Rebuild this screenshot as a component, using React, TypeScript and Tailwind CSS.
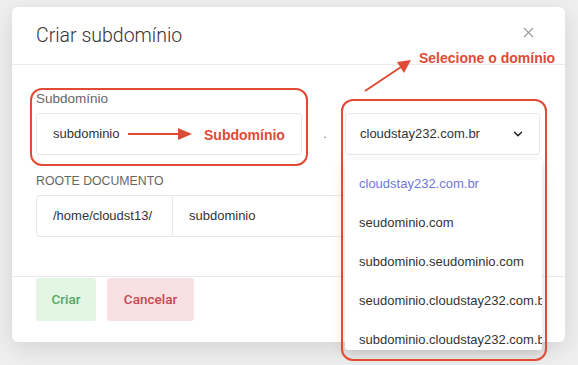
import { X, ChevronDown } from "lucide-react";

const domains = [
    "cloudstay232.com.br",
    "seudominio.com",
    "subdominio.seudominio.com",
    "seudominio.cloudstay232.com.br",
    "subdominio.cloudstay232.com.br",
];

const font = { fontFamily: "'Liberation Sans', Arial, sans-serif" };

export default function App() {
    return (
        <div className="relative w-[578px] h-[365px] overflow-hidden bg-[#efefef] pt-[7px] pl-[12px]" style={font}>
            {/* modal */}
            <div className="w-[553px] h-[335px] bg-white rounded-md shadow-[0_6px_24px_rgba(0,0,0,0.12)] flex flex-col">
                <div className="h-[58px] flex items-center justify-between pl-[24px] pr-[28px] border-b border-[#ebebeb]">
                    <h1 className="text-[19.5px] font-light text-[#333] pt-[1px]" style={{ fontFamily: "Roboto, sans-serif" }}>
                        Criar subdomínio
                    </h1>
                    <X className="w-[17px] h-[17px] text-[#9a9a9a] -mt-[6px]" strokeWidth={1.5} />
                </div>

                <div className="pl-[24px] pr-[25px] pt-[24px] pb-[39px] border-b border-[#ebebeb]">
                    <label className="block text-[13.5px] leading-[20px] text-[#666]">Subdomínio</label>
                    <div className="flex items-center mt-[4px]">
                        <div className="w-[266px] h-[42px] border border-[#e8e8e8] rounded-[3px] flex items-center pl-[16px] text-[13px] text-[#333]">
                            subdominio
                        </div>
                        <div className="flex-1 text-center text-[13px] text-[#777] pl-[3px]">.</div>
                        <div className="w-[195px] h-[42px] border border-[#e8e8e8] rounded-[3px] flex items-center justify-between pl-[14px] pr-[14px] text-[13px] text-[#333]">
                            cloudstay232.com.br
                            <ChevronDown className="w-[14px] h-[14px] text-[#222]" strokeWidth={2.5} />
                        </div>
                    </div>

                    <label className="block text-[12.3px] leading-[20px] text-[#666] mt-[16px]">ROOTE DOCUMENTO</label>
                    <div className="flex mt-[4px]">
                        <div className="w-[137px] h-[42px] border border-[#e8e8e8] rounded-l-[3px] flex items-center pl-[16px] text-[13px] text-[#333]">
                            /home/cloudst13/
                        </div>
                        <div className="flex-1 h-[42px] border border-l-0 border-[#e8e8e8] rounded-r-[3px] flex items-center pl-[16px] text-[13px] text-[#333]">
                            subdominio
                        </div>
                    </div>
                </div>

                <div className="flex gap-[11px] pl-[24px] pt-[1px]" style={{ fontFamily: "Roboto, sans-serif" }}>
                    <button className="w-[60px] h-[43px] rounded-[3px] bg-[#e3f5e3] text-[#5aa55c] text-[13.5px] font-medium">Criar</button>
                    <button className="w-[87px] h-[43px] rounded-[3px] bg-[#f9e1e3] text-[#c9464f] text-[13.5px] font-medium">Cancelar</button>
                </div>
            </div>

            {/* dropdown menu */}
            <div className="absolute left-[345px] top-[160px] w-[197px] h-[190px] overflow-hidden bg-white shadow-[0_4px_14px_rgba(0,0,0,0.15)] rounded-b-[3px] pt-[4px]">
                {domains.map((d, i) => (
                    <div
                        key={d}
                        className={`h-[39px] flex items-center pl-[14px] whitespace-nowrap text-[13px] ${i === 0 ? "text-[#6f78dc]" : "text-[#333]"}`}
                    >
                        {d}
                    </div>
                ))}
            </div>

            {/* annotations */}
            <div className="absolute left-[30px] top-[88px] w-[278px] h-[78px] border-2 border-[#e04b35] rounded-[12px]" />
            <div className="absolute left-[341px] top-[99px] w-[206px] h-[262px] border-2 border-[#e04b35] rounded-[12px]" />
            <span className="absolute left-[204px] top-[125px] text-[14px] font-bold text-[#e04b35]">Subdomínio</span>
            <span className="absolute left-[419px] top-[48px] text-[14px] font-bold text-[#e04b35]">Selecione o domínio</span>
            <svg className="absolute left-0 top-0" width="578" height="365" viewBox="0 0 578 365">
                <line x1="128" y1="134" x2="180" y2="134" stroke="#e04b35" strokeWidth="2" />
                <polygon points="192,134 178,128 178,140" fill="#e04b35" />
                <line x1="365" y1="91" x2="401" y2="67" stroke="#e04b35" strokeWidth="2" />
                <polygon points="411,60 397,62 404,73" fill="#e04b35" />
            </svg>
        </div>
    );
}
